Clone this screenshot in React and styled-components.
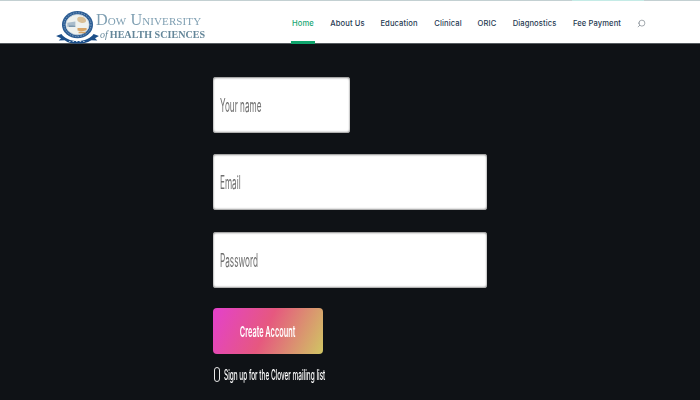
import React from "react";
import styled, { createGlobalStyle } from "styled-components";
import { Search } from "lucide-react";

const GlobalStyle = createGlobalStyle`
  html, body {
    margin: 0;
    padding: 0;
    height: 100%;
    background: #0f1216;
  }
  body {
    font-family: "Inter", "Liberation Sans", sans-serif;
    overflow: hidden;
  }
`;

const Page = styled.div`
  width: 700px;
  height: 400px;
  display: flex;
  flex-direction: column;
  background: #0f1216;
`;

const TopStrip = styled.div`
  height: 1px;
  background: #c3d0d2;
  display: flex;
`;

const StripAccent = styled.span`
  width: 72px;
  margin-left: 572px;
  background: #c4ebe6;
`;

const Header = styled.header`
  height: 43px;
  background: #fff;
  box-shadow: inset 0 -1px 0 #555a5e;
  padding-left: 55px;
  display: flex;
  align-items: stretch;
`;

const Logo = styled.a`
  display: flex;
  align-items: center;
  box-sizing: border-box;
  width: 236px;
  padding-top: 8px;
  filter: blur(0.45px);
`;

const LogoWords = styled.div`
  display: flex;
  flex-direction: column;
  margin-left: -4px;
  font-family: "Liberation Serif", serif;
  white-space: nowrap;
`;

const LogoTop = styled.span`
  font-size: 16.2px;
  line-height: 15px;
  color: #7f9fb2;
  font-variant: small-caps;
  letter-spacing: 0.1px;
`;

const LogoBottom = styled.span`
  font-size: 10.1px;
  line-height: 11px;
  color: #648699;
  font-weight: bold;
  margin-top: 1px;
  padding-left: 4px;

  i {
    font-weight: normal;
    font-size: 10px;
    margin-right: 2px;
  }
`;

const Nav = styled.nav`
  display: flex;
  align-items: stretch;
  gap: 16px;
`;

const NavItem = styled.a`
  display: flex;
  align-items: center;
  justify-content: center;
  box-sizing: border-box;
  padding-top: 1px;
  width: ${(p) => p.$w}px;
  white-space: nowrap;
  font-size: 7.6px;
  font-weight: 500;
  letter-spacing: 0.1px;
  color: ${(p) => (p.$active ? "#16a673" : "#1f3a52")};
  box-shadow: ${(p) => (p.$active ? "inset 0 -3px 0 #0fa56d" : "none")};
`;

const SearchButton = styled.span`
  display: flex;
  align-items: center;
  padding-top: 1px;
  color: #5f6a72;
  svg {
    transform: scaleX(-1);
  }
`;

const Main = styled.main`
  padding: 33px 0 0 213px;
  display: flex;
  flex-direction: column;
  align-items: flex-start;
`;

const Field = styled.div`
  width: ${(p) => p.$w}px;
  height: 56px;
  margin-bottom: ${(p) => p.$mb}px;
  box-sizing: border-box;
  background: #fff;
  border-radius: 3px;
  box-shadow: inset 0 1px 2px #8a8a8a, inset 0 -1px 2px #989898;
  overflow: hidden;
  display: flex;
  align-items: center;
  padding-left: 6.5px;
`;

const TextInput = styled.input`
  width: 500px;
  flex: none;
  border: 0;
  outline: 0;
  padding: 0;
  background: transparent;
  font-family: "Inter", "Liberation Sans", sans-serif;
  font-size: 18px;
  transform: scaleX(0.455);
  transform-origin: left center;
  &::placeholder {
    color: #6f6f6f;
    opacity: 1;
  }
`;

const SubmitButton = styled.button`
  width: 110px;
  height: 46px;
  border: 0;
  border-radius: 4px;
  padding: 0;
  margin-bottom: 12px;
  background: linear-gradient(115deg, #e443c6 4%, #e6587f 48%, #d0c663 100%);
  color: #fff;
  font-family: "Inter", "Liberation Sans", sans-serif;
  font-size: 15px;
  font-weight: 600;
  display: flex;
  align-items: center;
  justify-content: center;
  span {
    display: block;
    white-space: nowrap;
    transform: scaleX(0.49);
  }
`;

const Consent = styled.label`
  display: flex;
  align-items: center;
  height: 16px;
  color: #fff;
  font-size: 14px;
  font-weight: 500;
  white-space: nowrap;
`;

const CheckBox = styled.span`
  width: 3.5px;
  height: 13px;
  border: 1.5px solid #e8e8e8;
  border-radius: 3px;
  margin-left: 1px;
  margin-right: 4px;
`;

const ConsentText = styled.span`
  display: block;
  transform: scaleX(0.46);
  transform-origin: left center;
`;

function Crest() {
  return (
    <svg width="45" height="34" viewBox="0 0 42 36" preserveAspectRatio="none">
      <circle cx="21" cy="15.5" r="14.5" fill="#2c5d94" />
      <circle cx="21" cy="15.5" r="10.8" fill="#eef1ee" stroke="#cfd9e0" strokeWidth="0.8" />
      <circle cx="21" cy="15.5" r="12.6" fill="none" stroke="#9db7d0" strokeWidth="0.7" strokeDasharray="1.4 1.2" />
      <path d="M22 7.5c3-1 6 .5 7 3 .4 2-1.6 3.6-4 3.2-2.400-.4-4-1.600-4.200-3.400-.1-1.300.2-2.400 1.200-2.800z" fill="#d9bf96" />
      <path d="M21 19h8.500v2.300c-1.500 1.400-6.500 1.500-8.500.4zM22 23h6.500v1.600h-6.500z" fill="#d8a566" />
      <path d="M11.500 13.500l7.500-1.300v4.200l-7.500 1.500z" fill="#a9bccb" />
      <path d="M13 16.500h6v1.400h-6z" fill="#6f8ea8" />
      <path d="M1 27.500l5-2.200c2.400 4.300 8.500 7.500 15 7.500s12.600-3.200 15-7.500l5 2.200-3.600 2.400 2.100 2.500-5.500-.3C29.900 35 25.500 35.600 21 35.600s-8.900-.6-12-3.500l-5.500.3 2.100-2.500z" fill="#1c4f8a" />
      <path d="M13 33.300h16" stroke="#b8cde0" strokeWidth="1" strokeDasharray="1.500 1.800" />
    </svg>
  );
}

const menu = [
  { label: "Home", w: 24, active: true },
  { label: "About Us", w: 33 },
  { label: "Education", w: 38 },
  { label: "Clinical", w: 28 },
  { label: "ORIC", w: 18 },
  { label: "Diagnostics", w: 45 },
  { label: "Fee Payment", w: 48 },
];

export default function App() {
  return (
    <Page>
      <GlobalStyle />
      <TopStrip>
        <StripAccent />
      </TopStrip>
      <Header>
        <Logo>
          <Crest />
          <LogoWords>
            <LogoTop>Dow University</LogoTop>
            <LogoBottom>
              <i>of</i>HEALTH SCIENCES
            </LogoBottom>
          </LogoWords>
        </Logo>
        <Nav>
          {menu.map((item) => (
            <NavItem key={item.label} $w={item.w} $active={item.active}>
              {item.label}
            </NavItem>
          ))}
          <SearchButton>
            <Search size={9} strokeWidth={1.5} />
          </SearchButton>
        </Nav>
      </Header>
      <Main>
        <Field $w={137} $mb={21}>
          <TextInput placeholder="Your name" />
        </Field>
        <Field $w={274} $mb={22}>
          <TextInput placeholder="Email" />
        </Field>
        <Field $w={274} $mb={20}>
          <TextInput placeholder="Password" />
        </Field>
        <SubmitButton>
          <span>Create Account</span>
        </SubmitButton>
        <Consent>
          <CheckBox />
          <ConsentText>Sign up for the Clover mailing list</ConsentText>
        </Consent>
      </Main>
    </Page>
  );
}
